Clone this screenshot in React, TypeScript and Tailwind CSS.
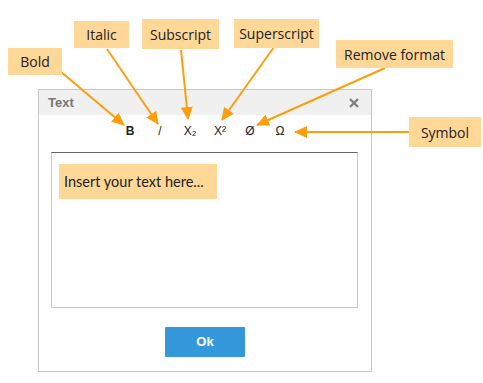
import React from "react"

type Note = { text: string; left: number; top: number; w: number; h: number }

const NOTES: Note[] = [
  { text: "Bold", left: 8, top: 48, w: 54, h: 27 },
  { text: "Italic", left: 74, top: 21, w: 55, h: 27 },
  { text: "Subscript", left: 142, top: 19, w: 77, h: 30 },
  { text: "Superscript", left: 234, top: 19, w: 85, h: 29 },
  { text: "Remove format", left: 336, top: 40, w: 117, h: 28 },
  { text: "Symbol", left: 409, top: 117, w: 72, h: 30 },
]

// [x1, y1, x2, y2] from label to tool button
const ARROWS: number[][] = [
  [60, 71, 124, 125],
  [107, 49, 158, 124],
  [181, 50, 188, 119],
  [274, 47, 222, 120],
  [385, 68, 257, 125],
  [409, 132, 295, 132],
]

const TOOLS = [
  { label: "B", cls: "font-bold" },
  { label: "/", cls: "" },
  { label: "X₂", cls: "" },
  { label: "X²", cls: "" },
  { label: "Ø", cls: "" },
  { label: "Ω", cls: "" },
]

export default function App() {
  return (
    <div className="relative w-[483px] h-[383px] bg-white overflow-hidden" style={{ fontFamily: "'Liberation Sans', Arial, sans-serif" }}>
      <div className="pt-[89px] pl-[38px]">
        <div className="w-[334px] h-[283px] border border-[#c8c8c8] bg-white flex flex-col">
          <div className="h-[25px] bg-[#f0f0f0] flex items-center justify-between pl-[9px] pr-[12px]">
            <span className="text-[13px] font-bold text-[#777]">Text</span>
            <svg width="10" height="10" viewBox="0 0 10 10">
              <path d="M1,1 L9,9 M9,1 L1,9" stroke="#808080" strokeWidth="2.4" />
            </svg>
          </div>
          <div className="flex justify-center pt-[8px] h-[37px]">
            {TOOLS.map((t) => (
              <div key={t.label} className={"w-[30px] text-center text-[12px] text-[#222] leading-[16px] " + t.cls}>
                {t.label}
              </div>
            ))}
          </div>
          <div className="ml-[12px] w-[307px] h-[156px] border border-[#c8c8c8] border-t-[#666] pt-[11px] pl-[7px]">
            <div
              className="w-[158px] h-[35px] bg-[#ffd797] flex items-center pl-[5px] text-[14.5px] text-[#222]"
              style={{ fontFamily: "Lato, 'Open Sans', sans-serif" }}
            >
              Insert your text here...
            </div>
          </div>
          <div className="flex justify-center pt-[19px]">
            <button className="w-[80px] h-[30px] bg-[#3498db] text-white text-[13px] font-bold rounded-[1px]">Ok</button>
          </div>
        </div>
      </div>

      <svg className="absolute inset-0" width="483" height="383">
        <defs>
          <marker id="head" markerUnits="userSpaceOnUse" markerWidth="14" markerHeight="12" refX="12" refY="6" orient="auto">
            <path d="M0,0 L13,6 L0,12 Z" fill="#ff9e0b" />
          </marker>
        </defs>
        {ARROWS.map((a, i) => (
          <line key={i} x1={a[0]} y1={a[1]} x2={a[2]} y2={a[3]} stroke="#ff9e0b" strokeWidth="2" markerEnd="url(#head)" />
        ))}
      </svg>

      {NOTES.map((n) => (
        <div
          key={n.text}
          className="absolute bg-[#ffd797] text-[#222] text-[14px] flex items-center justify-center whitespace-nowrap"
          style={{ left: n.left, top: n.top, width: n.w, height: n.h, fontFamily: "'Open Sans', sans-serif" }}
        >
          {n.text}
        </div>
      ))}
    </div>
  )
}
